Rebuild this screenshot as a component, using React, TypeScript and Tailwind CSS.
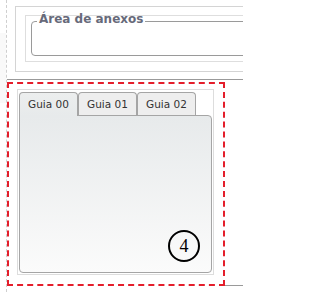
export default function App() {
  const tabs = ["Guia 00", "Guia 01", "Guia 02"];
  return (
    <div className="w-[243px] h-[292px] overflow-hidden bg-white flex font-['DejaVu_Sans',sans-serif]">
      <div className="w-[6px] shrink-0 pt-[33px]">
        <div className="h-[70px] bg-[#f9f9f9]" />
      </div>
      <div className="flex-1 min-w-0 border-l border-dashed border-[#cfcfcf] flex flex-col">
        <div className="h-[80px] shrink-0 border-b border-[#9a9a9a] pt-[6px] pl-[8px]">
          <div className="w-[280px] h-[66px] border border-[#d4d4d4] pt-[8px] pl-[9px]">
            <div className="h-[47px] border border-[#dedede] pl-[5px]">
              <fieldset className="h-[44px] -mt-[4px] border border-[#9a9a9a] rounded-[4px]">
                <legend className="ml-[5px] px-[2px] pb-[5px] text-[12px] leading-[14px] font-bold text-[#676a7a]">
                  Área de anexos
                </legend>
              </fieldset>
            </div>
          </div>
        </div>
        <div className="flex mt-[2px]">
          <div className="w-[218px] h-[204px] shrink-0 border-2 border-dashed border-[#e41e2b] pl-[8px] pt-[5px]">
            <div className="w-[197px] h-[186px] border border-[#dddddd] pt-[2px] pl-[1px]">
              <div className="flex h-[23px] items-start">
                {tabs.map((t, i) =>
                  i === 0 ? (
                    <div
                      key={t}
                      className="relative z-10 w-[59px] h-[24px] -mb-[1px] border border-b-0 border-[#a5a5a5] rounded-t-[4px] bg-gradient-to-b from-[#eceeee] to-[#e7eaeb] flex items-center justify-center pt-[1px] text-[10.5px] text-[#333]"
                    >
                      {t}
                    </div>
                  ) : (
                    <div
                      key={t}
                      className="w-[59px] h-[23px] border border-b-0 border-[#a5a5a5] rounded-t-[4px] bg-[#eeeeee] flex items-center justify-center pt-[1px] text-[10.5px] text-[#333]"
                    >
                      {t}
                    </div>
                  )
                )}
              </div>
              <div className="w-[193px] h-[158px] border border-[#a5a5a5] rounded-[4px] rounded-tl-none bg-gradient-to-b from-[#e7eaeb] to-[#fbfbfb] flex items-end justify-end pr-[11px] pb-[10px]">
                <div className="w-[32px] h-[32px] rounded-full border-2 border-black flex items-center justify-center font-['Liberation_Serif',serif] text-[18px] leading-none text-black">
                  4
                </div>
              </div>
            </div>
          </div>
          <div className="flex-1 h-[204px] border-b border-[#9a9a9a]" />
        </div>
      </div>
    </div>
  );
}
